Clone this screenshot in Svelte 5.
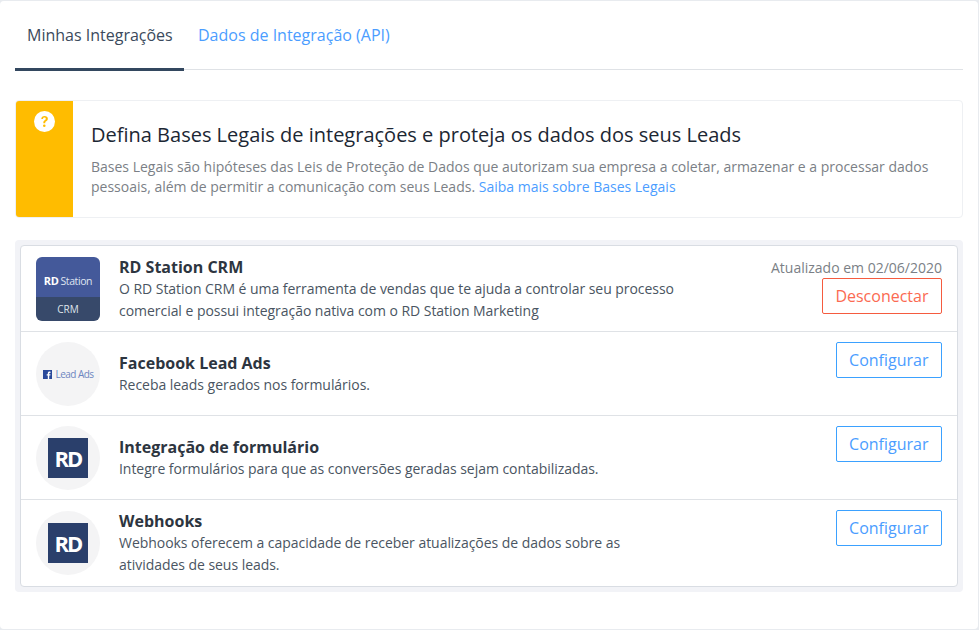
<script lang="ts">
	type Integration = {
		title: string;
		text: string;
		logo: 'crm' | 'facebook' | 'rd';
	};

	const integrations: Integration[] = [
		{
			title: 'RD Station CRM',
			text: 'O RD Station CRM é uma ferramenta de vendas que te ajuda a controlar seu processo comercial e possui integração nativa com o RD Station Marketing',
			logo: 'crm',
		},
		{
			title: 'Facebook Lead Ads',
			text: 'Receba leads gerados nos formulários.',
			logo: 'facebook',
		},
		{
			title: 'Integração de formulário',
			text: 'Integre formulários para que as conversões geradas sejam contabilizadas.',
			logo: 'rd',
		},
		{
			title: 'Webhooks',
			text: 'Webhooks oferecem a capacidade de receber atualizações de dados sobre as atividades de seus leads.',
			logo: 'rd',
		},
	];
</script>

<div class="page">
	<div class="panel">
		<nav class="tabs">
			<a class="tab active" href="#minhas">Minhas Integrações</a>
			<a class="tab" href="#dados">Dados de Integração (API)</a>
		</nav>

		<section class="notice">
			<div class="notice-side">
				<svg width="21" height="21" viewBox="0 0 20 20" aria-hidden="true">
					<circle cx="10" cy="10" r="10" fill="#fff" />
					<path d="M6.9 7.6C7 5.8 8.2 4.7 10.1 4.7c1.800 0 3.100 1 3.100 2.600 0 1.200-.6 1.800-1.500 2.400-.8.5-1 .8-1 1.600v.3H8.900v-.5c0-1.100.4-1.700 1.200-2.200.8-.5 1.100-.9 1.100-1.500 0-.7-.5-1.100-1.200-1.100-.8 0-1.300.5-1.400 1.300z" fill="#ffbc00" />
					<circle cx="9.800" cy="14.100" r="1.200" fill="#ffbc00" />
				</svg>
			</div>
			<div class="notice-body">
				<h2>Defina Bases Legais de integrações e proteja os dados dos seus Leads</h2>
				<p>
					Bases Legais são hipóteses das Leis de Proteção de Dados que autorizam sua empresa a coletar, armazenar e a processar dados pessoais, além de permitir a comunicação com seus Leads.
					<a href="#bases">Saiba mais sobre Bases Legais</a>
				</p>
			</div>
		</section>

		<div class="list-wrap">
			<ul class="list">
				{#each integrations as item}
					<li class="row">
						{#if item.logo === 'crm'}
							<div class="logo-crm">
								<div class="crm-top"><b>RD</b><span>Station</span></div>
								<div class="crm-bottom">CRM</div>
							</div>
						{:else if item.logo === 'facebook'}
							<div class="logo-circle">
								<svg width="9" height="9" viewBox="0 0 9 9" aria-hidden="true">
									<rect width="9" height="9" fill="#2b4a9b" />
									<path d="M6.200 9V5.600h1.100l.2-1.300H6.200v-.8c0-.4.1-.6.6-.6h.7V1.700c-.2 0-.6-.1-1-.1-1 0-1.700.6-1.700 1.700v1H3.700v1.300h1.100V9z" fill="#fff" />
								</svg>
								<span class="lead-ads">Lead Ads</span>
							</div>
						{:else}
							<div class="logo-circle">
								<div class="rd-square">RD</div>
							</div>
						{/if}

						<div class="row-text">
							<h3>{item.title}</h3>
							<p>{item.text}</p>
						</div>

						<div class="row-actions">
							{#if item.logo === 'crm'}
								<span class="updated">Atualizado em 02/06/2020</span>
								<button class="btn danger">Desconectar</button>
							{:else}
								<button class="btn">Configurar</button>
							{/if}
						</div>
					</li>
				{/each}
			</ul>
		</div>
	</div>
</div>

<style>
	:global(body) {
		margin: 0;
		background: #e8ebef;
		font-family: 'Open Sans', sans-serif;
	}

	.page {
		width: 979px;
		height: 630px;
		box-sizing: border-box;
		padding-top: 1px;
		overflow: hidden;
	}

	.panel {
		width: 978px;
		height: 628px;
		box-sizing: border-box;
		padding: 0 15px;
		background: #fff;
		border-radius: 4px;
	}

	.tabs {
		display: flex;
		height: 69px;
		box-sizing: border-box;
		border-bottom: 1px solid #dfe2e6;
	}

	.tab {
		display: block;
		height: 70px;
		box-sizing: border-box;
		padding: 22px 12px 0;
		font-size: 16px;
		line-height: 24px;
		white-space: nowrap;
		color: #4b9dff;
		text-decoration: none;
	}

	.tab.active {
		width: 169px;
		color: #3b4a5c;
		border-bottom: 3px solid #33475f;
		margin-right: 2px;
	}

	.notice {
		display: flex;
		width: 948px;
		height: 118px;
		box-sizing: border-box;
		margin-top: 30px;
		background: #fff;
		border: 1px solid #eef0f3;
		border-radius: 4px;
		overflow: hidden;
	}

	.notice-side {
		width: 57px;
		flex: none;
		display: flex;
		justify-content: center;
		align-items: flex-start;
		padding-top: 10px;
		box-sizing: border-box;
		background: #ffbc00;
	}

	.notice-body {
		padding: 20px 18px 0;
	}

	.notice-body h2 {
		margin: 0;
		font-size: 20px;
		line-height: 28px;
		font-weight: 400;
		color: #1c2733;
	}

	.notice-body p {
		margin: 8px 0 0;
		font-size: 14px;
		line-height: 20px;
		color: #7b7f86;
	}

	.notice-body a {
		color: #4b9dff;
		text-decoration: none;
	}

	.list-wrap {
		width: 948px;
		box-sizing: border-box;
		margin-top: 22px;
		padding: 5px;
		background: #f2f3f7;
		border-radius: 4px;
	}

	.list {
		list-style: none;
		margin: 0;
		padding: 0;
		background: #fff;
		border: 1px solid #d9dde3;
		border-radius: 4px;
	}

	.row {
		display: flex;
		align-items: center;
		padding: 10px 15px 9px;
		border-bottom: 1px solid #dfe2e6;
	}

	.row:last-child {
		border-bottom: 0;
		padding-bottom: 10px;
	}

	.logo-crm,
	.logo-circle {
		width: 64px;
		height: 64px;
		flex: none;
	}

	.logo-crm {
		border-radius: 6px;
		overflow: hidden;
		display: flex;
		flex-direction: column;
	}

	.crm-top {
		height: 40px;
		box-sizing: border-box;
		padding-top: 7px;
		display: flex;
		align-items: center;
		justify-content: center;
		gap: 2px;
		background: #44599a;
		color: #dfe4f0;
		font-size: 10.5px;
		letter-spacing: -0.4px;
	}

	.crm-top b {
		font-size: 11px;
		color: #fff;
	}

	.crm-bottom {
		flex: 1;
		display: flex;
		align-items: center;
		justify-content: center;
		background: #37496a;
		color: #dfe4ea;
		font-size: 10px;
	}

	.logo-circle {
		border-radius: 50%;
		background: #f4f4f5;
		display: flex;
		align-items: center;
		justify-content: center;
		gap: 4px;
	}

	.lead-ads {
		font-size: 10px;
		letter-spacing: -0.55px;
		color: #6d86c0;
	}

	.rd-square {
		width: 40px;
		height: 40px;
		display: flex;
		align-items: center;
		justify-content: center;
		background: #2a3f6b;
		color: #fff;
		font-size: 22px;
		font-weight: 700;
		letter-spacing: -2px;
	}

	.row-text {
		width: 570px;
		margin-left: 19px;
	}

	.row-text h3 {
		margin: 0;
		font-size: 16px;
		line-height: 22px;
		font-weight: 700;
		color: #2d3540;
	}

	.row-text p {
		margin: 0;
		font-size: 14px;
		line-height: 22px;
		letter-spacing: -0.04px;
		color: #4a5562;
	}

	.row-actions {
		align-self: flex-start;
		margin-left: auto;
		display: flex;
		flex-direction: column;
		align-items: flex-end;
	}

	.updated {
		padding-top: 1px;
		font-size: 14px;
		line-height: 21px;
		color: #7b7f86;
	}

	.btn {
		height: 36px;
		padding: 0 12.5px;
		font-family: inherit;
		font-size: 16px;
		color: #4b9dff;
		background: #fff;
		border: 1px solid #3ba1ff;
		border-radius: 2px;
	}

	.btn.danger {
		color: #fb6a52;
		border-color: #f55b3f;
	}
</style>
